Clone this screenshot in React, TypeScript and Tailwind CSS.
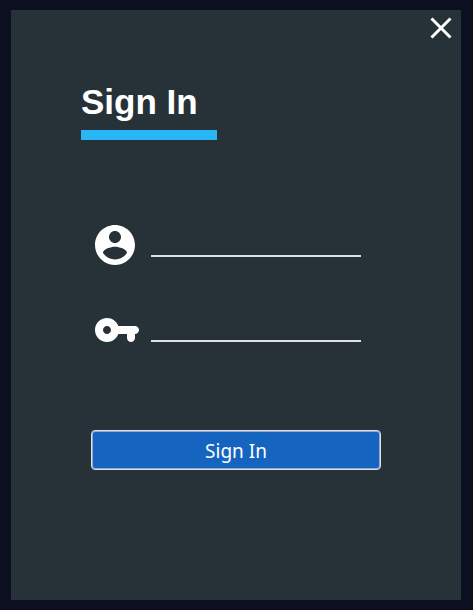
import React from "react";

function CloseIcon() {
  return (
    <svg viewBox="0 0 22 22" className="size-[22px]" fill="none" stroke="currentColor" strokeWidth="3" aria-hidden="true">
      <path d="M1.5 1.5 20.5 20.5M20.5 1.5 1.5 20.5" />
    </svg>
  );
}

function AccountIcon() {
  return (
    <svg viewBox="2 2 20 20" className="size-10" fill="currentColor" aria-hidden="true">
      <path d="M12 2C6.48 2 2 6.48 2 12s4.48 10 10 10 10-4.48 10-10S17.52 2 12 2zm0 3c1.66 0 3 1.34 3 3s-1.34 3-3 3-3-1.34-3-3 1.34-3 3-3zm0 14.2c-2.5 0-4.71-1.28-6-3.22.03-1.99 4-3.08 6-3.08 1.99 0 5.97 1.09 6 3.08-1.29 1.94-3.5 3.22-6 3.22z" />
    </svg>
  );
}

function KeyIcon() {
  return (
    <svg viewBox="1 6 22 12" className="h-6 w-11" fill="currentColor" aria-hidden="true">
      <path d="M21 10h-8.35C11.83 7.67 9.61 6 7 6c-3.31 0-6 2.69-6 6s2.69 6 6 6c2.61 0 4.83-1.67 5.65-4H17v2c0 1.1.9 2 2 2s2-.9 2-2v-2c1.1 0 2-.9 2-2s-.9-2-2-2zM7 14c-1.1 0-2-.9-2-2s.9-2 2-2 2 .9 2 2-.9 2-2 2z" />
    </svg>
  );
}

type FieldProps = {
  id: string;
  label: string;
  type: string;
  icon: React.ReactNode;
};

function Field({ id, label, type, icon }: FieldProps) {
  return (
    <div className="flex items-center">
      <label htmlFor={id} aria-label={label} className="w-14 shrink-0">
        {icon}
      </label>
      <input
        id={id}
        type={type}
        className="h-6 w-full max-w-[210px] border-b-2 border-[#e3e0e2] bg-transparent text-base text-white outline-none"
      />
    </div>
  );
}

export default function App() {
  return (
    <div className="flex min-h-screen bg-[#0b0f20] py-2.5 pr-3 pl-[11px] font-['Liberation_Sans',Arial,sans-serif] text-white">
      <main className="flex-1 bg-[#263238]">
        <div className="flex justify-end px-[9px] pt-[7px]">
          <button type="button" aria-label="Close">
            <CloseIcon />
          </button>
        </div>
        <form className="pr-20 pl-[70px]">
          <div className="pt-[43px]">
            <h1 className="text-[35px] leading-10 font-bold">Sign In</h1>
            <div className="mt-2 h-2.5 w-[136px] bg-[#29b6f6]" />
          </div>
          <div className="flex flex-col gap-[53px] pt-[85px] pl-3.5">
            <Field id="username" label="Username" type="text" icon={<AccountIcon />} />
            <Field id="password" label="Password" type="password" icon={<KeyIcon />} />
          </div>
          <div className="pt-[88px] pl-2.5">
            <button
              type="submit"
              className="h-10 w-full rounded-[4px] border border-[#dcdfe6] bg-[#1565c0] pt-0.5 font-['Noto_Sans',Tahoma,sans-serif] text-[19px] leading-6 shadow-[inset_0_0_0_1px_#8fabd3]"
            >
              Sign In
            </button>
          </div>
        </form>
      </main>
    </div>
  );
}
